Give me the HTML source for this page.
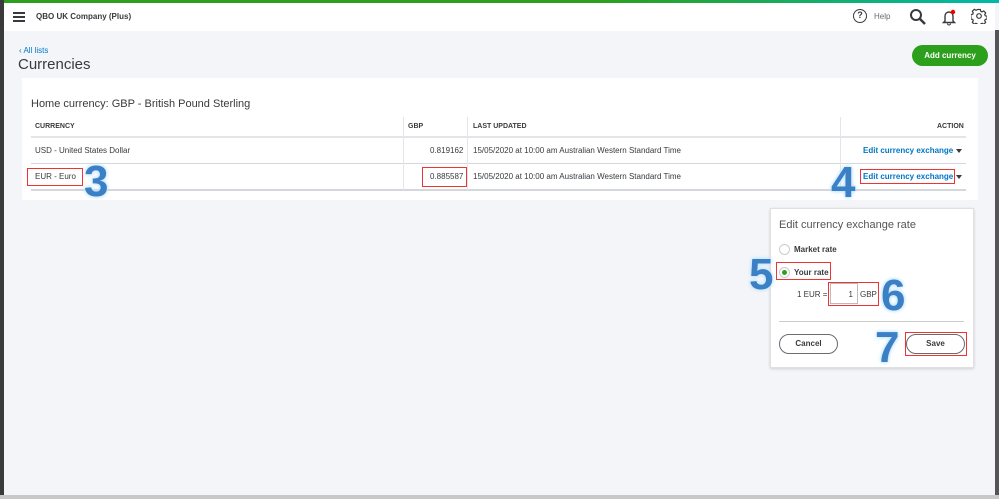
<!DOCTYPE html>
<html><head><style>
*{margin:0;padding:0;box-sizing:border-box}
body{width:999px;height:499px;overflow:hidden;background:#f4f5f8;font-family:"Liberation Sans",sans-serif;position:relative;color:#393a3d}
.a{position:absolute}
.t{font-size:8px;color:#393a3d}
.h{font-size:7px;font-weight:bold;color:#393a3d}
.num{position:absolute;font-family:"Liberation Sans",sans-serif;font-weight:bold;font-size:44px;color:#3b7fc4;text-shadow:0 0 3px #bde3ff,0 0 5px #bde3ff;line-height:1}
.red{position:absolute;border:1px solid #e33}
.lnk{color:#0077c5;font-size:8px;font-weight:bold}
</style></head><body>
<div class="a" style="left:0;top:0;width:999px;height:3px;background:linear-gradient(90deg,#2ca01c,#2ca01c 60%,#00b9a9)"></div>
<div class="a" style="left:0;top:0;width:4px;height:499px;background:#3a3a3a"></div>
<div class="a" style="left:995px;top:30px;width:4px;height:469px;background:#555"></div>
<div class="a" style="left:4px;top:3px;width:991px;height:28px;background:#fff"></div>
<div class="a" style="left:13px;top:12px;width:12px;height:2px;background:#393a3d;box-shadow:0 4px 0 #393a3d,0 8px 0 #393a3d"></div>
<div class="a" style="left:36px;top:12px;font-size:8px;font-weight:bold">QBO UK Company (Plus)</div>
<div class="a" style="left:853px;top:9px;width:14px;height:14px;border:1.5px solid #393a3d;border-radius:50%;font-size:9px;font-weight:bold;text-align:center;line-height:11px">?</div>
<div class="a" style="left:874px;top:12px;font-size:8px;color:#6b6c72">Help</div>
<svg class="a" style="left:909px;top:8px" width="18" height="18"><circle cx="7" cy="7" r="5" fill="none" stroke="#393a3d" stroke-width="2"/><line x1="11" y1="11" x2="16" y2="16" stroke="#393a3d" stroke-width="2.5"/></svg>
<svg class="a" style="left:941px;top:8px" width="16" height="18"><path d="M4 13V8a4 4 0 0 1 8 0v5l1.5 1.5h-11z" fill="none" stroke="#393a3d" stroke-width="1.4"/><path d="M6.5 15.5a1.5 1.5 0 0 0 3 0" fill="none" stroke="#393a3d"/><circle cx="12" cy="4" r="2.2" fill="#e00"/></svg>
<svg class="a" style="left:971px;top:8px" width="16" height="16" viewBox="0 0 16 16"><path d="M6.6 1.5h2.8l.4 1.8 1.3.6 1.6-1 2 2-1 1.6.6 1.3 1.8.4v2.8l-1.8.4-.6 1.3 1 1.6-2 2-1.6-1-1.3.6-.4 1.8H6.6l-.4-1.8-1.3-.6-1.6 1-2-2 1-1.6-.6-1.3-1.8-.4V6.6l1.8-.4.6-1.3-1-1.6 2-2 1.6 1 1.3-.6z" fill="none" stroke="#393a3d" stroke-width="1.2" stroke-linejoin="round"/><circle cx="8" cy="8" r="2.3" fill="none" stroke="#393a3d" stroke-width="1.2"/></svg>
<div class="a" style="left:19px;top:46px;font-size:8px;color:#0077c5">&#8249; All lists</div>
<div class="a" style="left:18px;top:56px;font-size:15px;color:#393a3d">Currencies</div>
<div class="a" style="left:912px;top:45px;width:76px;height:21px;background:#2ca01c;border-radius:11px;color:#fff;font-size:8px;font-weight:bold;text-align:center;line-height:21px">Add currency</div>
<div class="a" style="left:22px;top:78px;width:956px;height:122px;background:#fff"></div>
<div class="a" style="left:31px;top:98px;font-size:11px">Home currency: GBP - British Pound Sterling</div>
<div class="a" style="left:31px;top:136px;width:935px;height:2px;background:#e3e5e8"></div>
<div class="a" style="left:31px;top:163px;width:935px;height:1px;background:#d4d7dc"></div>
<div class="a" style="left:31px;top:189px;width:935px;height:2px;background:#d4d7dc"></div>
<div class="a" style="left:403px;top:117px;width:1px;height:73px;background:#e3e5e8"></div>
<div class="a" style="left:467px;top:117px;width:1px;height:73px;background:#e3e5e8"></div>
<div class="a" style="left:840px;top:117px;width:1px;height:73px;background:#e3e5e8"></div>
<div class="a h" style="left:35px;top:123px">CURRENCY</div>
<div class="a h" style="left:408px;top:123px">GBP</div>
<div class="a h" style="left:473px;top:123px">LAST UPDATED</div>
<div class="a h" style="left:937px;top:123px">ACTION</div>
<div class="a t" style="left:35px;top:146px">USD - United States Dollar</div>
<div class="a t" style="left:430px;top:146px">0.819162</div>
<div class="a t" style="left:473px;top:146px">15/05/2020 at 10:00 am Australian Western Standard Time</div>
<div class="a lnk" style="left:863px;top:146px">Edit currency exchange</div>
<div class="a" style="left:956px;top:149px;border:3px solid transparent;border-top:4px solid #393a3d"></div>
<div class="a t" style="left:35px;top:172px">EUR - Euro</div>
<div class="a t" style="left:430px;top:172px">0.885587</div>
<div class="a t" style="left:473px;top:172px">15/05/2020 at 10:00 am Australian Western Standard Time</div>
<div class="a lnk" style="left:863px;top:172px">Edit currency exchange</div>
<div class="a" style="left:956px;top:175px;border:3px solid transparent;border-top:4px solid #393a3d"></div>
<div class="red" style="left:27px;top:168px;width:56px;height:18px"></div>
<div class="red" style="left:422px;top:167px;width:45px;height:20px"></div>
<div class="red" style="left:860px;top:169px;width:95px;height:15px"></div>
<div class="num" style="left:84px;top:160px">3</div>
<div class="num" style="left:831px;top:161px">4</div>
<div class="a" style="left:770px;top:208px;width:204px;height:160px;background:#fff;border:1px solid #e0e0e0;box-shadow:0 1px 3px rgba(0,0,0,.15)"></div>
<div class="a" style="left:779px;top:219px;font-size:11px;color:#555">Edit currency exchange rate</div>
<div class="a" style="left:779px;top:244px;width:11px;height:11px;border:1px solid #ccc;border-radius:50%"></div>
<div class="a" style="left:794px;top:245px;font-size:8px;font-weight:bold">Market rate</div>
<div class="a" style="left:779px;top:267px;width:11px;height:11px;border:1px solid #ccc;border-radius:50%"></div>
<div class="a" style="left:782px;top:270px;width:5px;height:5px;background:#2ca01c;border-radius:50%"></div>
<div class="a" style="left:794px;top:268px;font-size:8px;font-weight:bold">Your rate</div>
<div class="red" style="left:776px;top:262px;width:55px;height:18px"></div>
<div class="a t" style="left:797px;top:290px">1 EUR =</div>
<div class="a" style="left:830px;top:283px;width:28px;height:21px;border:1px solid #bbb;font-size:8px;text-align:right;padding:6px 4px 0 0">1</div>
<div class="a t" style="left:860px;top:290px">GBP</div>
<div class="red" style="left:828px;top:282px;width:51px;height:24px"></div>
<div class="num" style="left:749px;top:253px">5</div>
<div class="num" style="left:881px;top:274px">6</div>
<div class="a" style="left:779px;top:321px;width:185px;height:1px;background:#ccc"></div>
<div class="a" style="left:779px;top:334px;width:59px;height:20px;border:1.5px solid #6b6c72;border-radius:11px;font-size:8px;font-weight:bold;text-align:center;line-height:17px">Cancel</div>
<div class="a" style="left:906px;top:334px;width:59px;height:20px;border:1.5px solid #6b6c72;border-radius:11px;font-size:8px;font-weight:bold;text-align:center;line-height:17px">Save</div>
<div class="red" style="left:905px;top:332px;width:62px;height:24px"></div>
<div class="num" style="left:875px;top:326px">7</div>
<div class="a" style="left:0;top:495px;width:999px;height:4px;background:#c8c8c8"></div>
</body></html>
